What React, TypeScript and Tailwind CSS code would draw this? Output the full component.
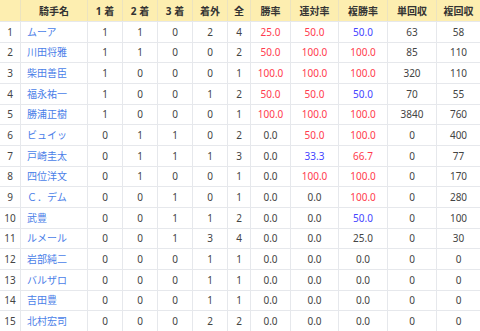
import React from "react";

type Row = {
  n: number;
  name: string;
  a: number;
  b: number;
  c: number;
  d: number;
  t: number;
  r1: string;
  r2: string;
  r3: string;
  t1: number;
  t2: number;
};

const rows: Row[] = [
  { n: 1, name: "ムーア", a: 1, b: 1, c: 0, d: 2, t: 4, r1: "25.0", r2: "50.0", r3: "50.0", t1: 63, t2: 58 },
  { n: 2, name: "川田将雅", a: 1, b: 1, c: 0, d: 0, t: 2, r1: "50.0", r2: "100.0", r3: "100.0", t1: 85, t2: 110 },
  { n: 3, name: "柴田善臣", a: 1, b: 0, c: 0, d: 0, t: 1, r1: "100.0", r2: "100.0", r3: "100.0", t1: 320, t2: 110 },
  { n: 4, name: "福永祐一", a: 1, b: 0, c: 0, d: 1, t: 2, r1: "50.0", r2: "50.0", r3: "50.0", t1: 70, t2: 55 },
  { n: 5, name: "勝浦正樹", a: 1, b: 0, c: 0, d: 0, t: 1, r1: "100.0", r2: "100.0", r3: "100.0", t1: 3840, t2: 760 },
  { n: 6, name: "ビュイッ", a: 0, b: 1, c: 1, d: 0, t: 2, r1: "0.0", r2: "50.0", r3: "100.0", t1: 0, t2: 400 },
  { n: 7, name: "戸崎圭太", a: 0, b: 1, c: 1, d: 1, t: 3, r1: "0.0", r2: "33.3", r3: "66.7", t1: 0, t2: 77 },
  { n: 8, name: "四位洋文", a: 0, b: 1, c: 0, d: 0, t: 1, r1: "0.0", r2: "100.0", r3: "100.0", t1: 0, t2: 170 },
  { n: 9, name: "Ｃ．デム", a: 0, b: 0, c: 1, d: 0, t: 1, r1: "0.0", r2: "0.0", r3: "100.0", t1: 0, t2: 280 },
  { n: 10, name: "武豊", a: 0, b: 0, c: 1, d: 1, t: 2, r1: "0.0", r2: "0.0", r3: "50.0", t1: 0, t2: 100 },
  { n: 11, name: "ルメール", a: 0, b: 0, c: 1, d: 3, t: 4, r1: "0.0", r2: "0.0", r3: "25.0", t1: 0, t2: 30 },
  { n: 12, name: "岩部純二", a: 0, b: 0, c: 0, d: 1, t: 1, r1: "0.0", r2: "0.0", r3: "0.0", t1: 0, t2: 0 },
  { n: 13, name: "バルザロ", a: 0, b: 0, c: 0, d: 1, t: 1, r1: "0.0", r2: "0.0", r3: "0.0", t1: 0, t2: 0 },
  { n: 14, name: "吉田豊", a: 0, b: 0, c: 0, d: 1, t: 1, r1: "0.0", r2: "0.0", r3: "0.0", t1: 0, t2: 0 },
  { n: 15, name: "北村宏司", a: 0, b: 0, c: 0, d: 2, t: 2, r1: "0.0", r2: "0.0", r3: "0.0", t1: 0, t2: 0 },
];

const RED = "text-[#ff3b4e]";
const BLUE = "text-[#4545ff]";
const GRAY = "text-[#444]";

function c1(v: string) {
  return parseFloat(v) >= 25 ? RED : GRAY;
}
function c2(v: string) {
  const x = parseFloat(v);
  if (x >= 50) return RED;
  if (x >= 30) return BLUE;
  return GRAY;
}
function c3(v: string) {
  const x = parseFloat(v);
  if (x > 50) return RED;
  if (x >= 50) return BLUE;
  return GRAY;
}

const cols =
  "grid grid-cols-[21px_67px_35px_35px_35px_35px_23px_40px_48px_49px_49px_43px]";
const hc = "flex items-center justify-center border-r border-[#ece3bf]";
const bc = "flex items-center justify-center border-r border-b border-[#e6e8ec]";

export default function App() {
  return (
    <div
      className="w-[480px] h-[331px] overflow-hidden bg-white text-[10px] leading-none"
      style={{ fontFamily: "'Noto Sans', 'Noto Sans CJK JP', sans-serif" }}
    >
      <div className={`${cols} h-[22px] bg-[#fdeeb0] text-[#333] font-bold border-b border-[#e6e8ec]`}>
        <div className={hc}></div>
        <div className={hc}>騎手名</div>
        <div className={hc}>1 着</div>
        <div className={hc}>2 着</div>
        <div className={hc}>3 着</div>
        <div className={hc}>着外</div>
        <div className={hc}>全</div>
        <div className={hc}>勝率</div>
        <div className={hc}>連対率</div>
        <div className={hc}>複勝率</div>
        <div className={hc}>単回収</div>
        <div className="flex items-center justify-center">複回収</div>
      </div>
      {rows.map((r) => (
        <div key={r.n} className={`${cols} h-[20.67px] text-[#444]`}>
          <div className={bc}>{r.n}</div>
          <div className="flex items-center pl-[6px] border-r border-b border-[#e6e8ec] text-[#4a7ee8] whitespace-nowrap overflow-hidden">
            {r.name}
          </div>
          <div className={bc}>{r.a}</div>
          <div className={bc}>{r.b}</div>
          <div className={bc}>{r.c}</div>
          <div className={bc}>{r.d}</div>
          <div className={bc}>{r.t}</div>
          <div className={`${bc} ${c1(r.r1)}`}>{r.r1}</div>
          <div className={`${bc} ${c2(r.r2)}`}>{r.r2}</div>
          <div className={`${bc} ${c3(r.r3)}`}>{r.r3}</div>
          <div className={bc}>{r.t1}</div>
          <div className="flex items-center justify-center border-b border-[#e6e8ec]">{r.t2}</div>
        </div>
      ))}
    </div>
  );
}
